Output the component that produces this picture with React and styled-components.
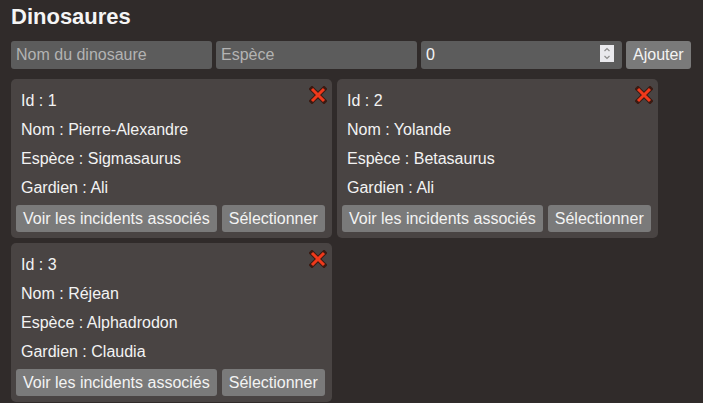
import styled, { createGlobalStyle } from 'styled-components'

const GlobalStyle = createGlobalStyle`
    html, body {
        margin: 0;
        padding: 0;
        background: #302b2a;
    }

    body {
        font-family: "Liberation Sans", Arial, sans-serif;
        color: #f3f3f3;
    }
`;

const dinosaures = [
    { id: 1, nom: 'Pierre-Alexandre', espece: 'Sigmasaurus', gardien: 'Ali' },
    { id: 2, nom: 'Yolande', espece: 'Betasaurus', gardien: 'Ali' },
    { id: 3, nom: 'Réjean', espece: 'Alphadrodon', gardien: 'Claudia' },
]

const DeleteIcon = () => (
    <svg width="18" height="18" viewBox="0 0 18 18">
        <path d="M3 3 L15 15 M15 3 L3 15" stroke="#3a1a12" strokeWidth="5" strokeLinecap="square" fill="none"/>
        <path d="M3 3 L15 15 M15 3 L3 15" stroke="#f0391b" strokeWidth="3" strokeLinecap="butt" fill="none"/>
    </svg>
)

const SpinIcon = () => (
    <svg width="14" height="17" viewBox="0 0 14 17">
        <path d="M4.5 6 L7 3.5 L9.5 6" stroke="#8c8c8c" strokeWidth="1.2" fill="none"/>
        <path d="M4.5 11 L7 13.5 L9.5 11" stroke="#8c8c8c" strokeWidth="1.2" fill="none"/>
    </svg>
)

const DinoCard = ({ dino }) => {
    return (
        <Card>
            <DeleteButton aria-label="Supprimer">
                <DeleteIcon/>
            </DeleteButton>
            <Infos>
                <Line>Id : {dino.id}</Line>
                <Line>Nom : {dino.nom}</Line>
                <Line>Espèce : {dino.espece}</Line>
                <Line>Gardien : {dino.gardien}</Line>
            </Infos>
            <Actions>
                <Button>Voir les incidents associés</Button>
                <Button>Sélectionner</Button>
            </Actions>
        </Card>
    )
}

const App = () => {
    return (
        <Page>
            <GlobalStyle/>
            <Title>Dinosaures</Title>
            <Form onSubmit={(e) => e.preventDefault()}>
                <Input type="text" placeholder="Nom du dinosaure"/>
                <Input type="text" placeholder="Espèce"/>
                <NumberField>
                    <Input type="number" defaultValue={0}/>
                    <Spinner>
                        <SpinIcon/>
                    </Spinner>
                </NumberField>
                <Button type="submit" $add>Ajouter</Button>
            </Form>
            <Grid>
                {dinosaures.map((dino) => (
                    <DinoCard key={dino.id} dino={dino}/>
                ))}
            </Grid>
        </Page>
    )
}

export default App

const Page = styled.div`
    padding: 4px 11px 0;
`;

const Title = styled.h1`
    margin: 0;
    font-size: 22px;
    line-height: 25px;
    font-weight: 700;
    color: #f5f5f5;
`;

const Form = styled.form`
    display: flex;
    gap: 4px;
    margin-top: 12px;
`;

const Input = styled.input`
    box-sizing: border-box;
    width: 201px;
    height: 28px;
    padding: 0 5px;
    border: none;
    border-radius: 3px;
    background: #5c5c5c;
    color: #f5f5f5;
    font-family: "Liberation Sans", Arial, sans-serif;
    font-size: 16px;
    outline: none;
    -moz-appearance: textfield;

    &::placeholder {
        color: #b3b3b3;
    }

    &::-webkit-inner-spin-button,
    &::-webkit-outer-spin-button {
        -webkit-appearance: none;
        margin: 0;
    }
`;

const NumberField = styled.div`
    position: relative;
    display: flex;
`;

const Spinner = styled.span`
    position: absolute;
    top: 4px;
    right: 8px;
    display: flex;
    width: 14px;
    height: 17px;
    background: #e9e9ed;
    pointer-events: none;
`;

const Button = styled.button`
    box-sizing: border-box;
    height: ${(p) => (p.$add ? '28px' : '27px')};
    padding: 0 7px;
    border: none;
    border-radius: 3px;
    background: #7a7a7a;
    color: #f3f3f3;
    font-family: "Liberation Sans", Arial, sans-serif;
    font-size: 16px;
    white-space: nowrap;
    cursor: pointer;
`;

const Grid = styled.div`
    display: flex;
    flex-wrap: wrap;
    gap: 5px;
    margin-top: 10px;
`;

const Card = styled.div`
    position: relative;
    box-sizing: border-box;
    width: 321px;
    padding: 7px 5px 6px;
    border-radius: 5px;
    background: #494443;
`;

const DeleteButton = styled.span`
    position: absolute;
    top: 7px;
    right: 5px;
    display: flex;
    cursor: pointer;
`;

const Infos = styled.div`
    padding-left: 5px;
`;

const Line = styled.p`
    margin: 0;
    font-size: 16px;
    line-height: 29px;
`;

const Actions = styled.div`
    display: flex;
    gap: 5px;
    margin-top: 3px;
`;
